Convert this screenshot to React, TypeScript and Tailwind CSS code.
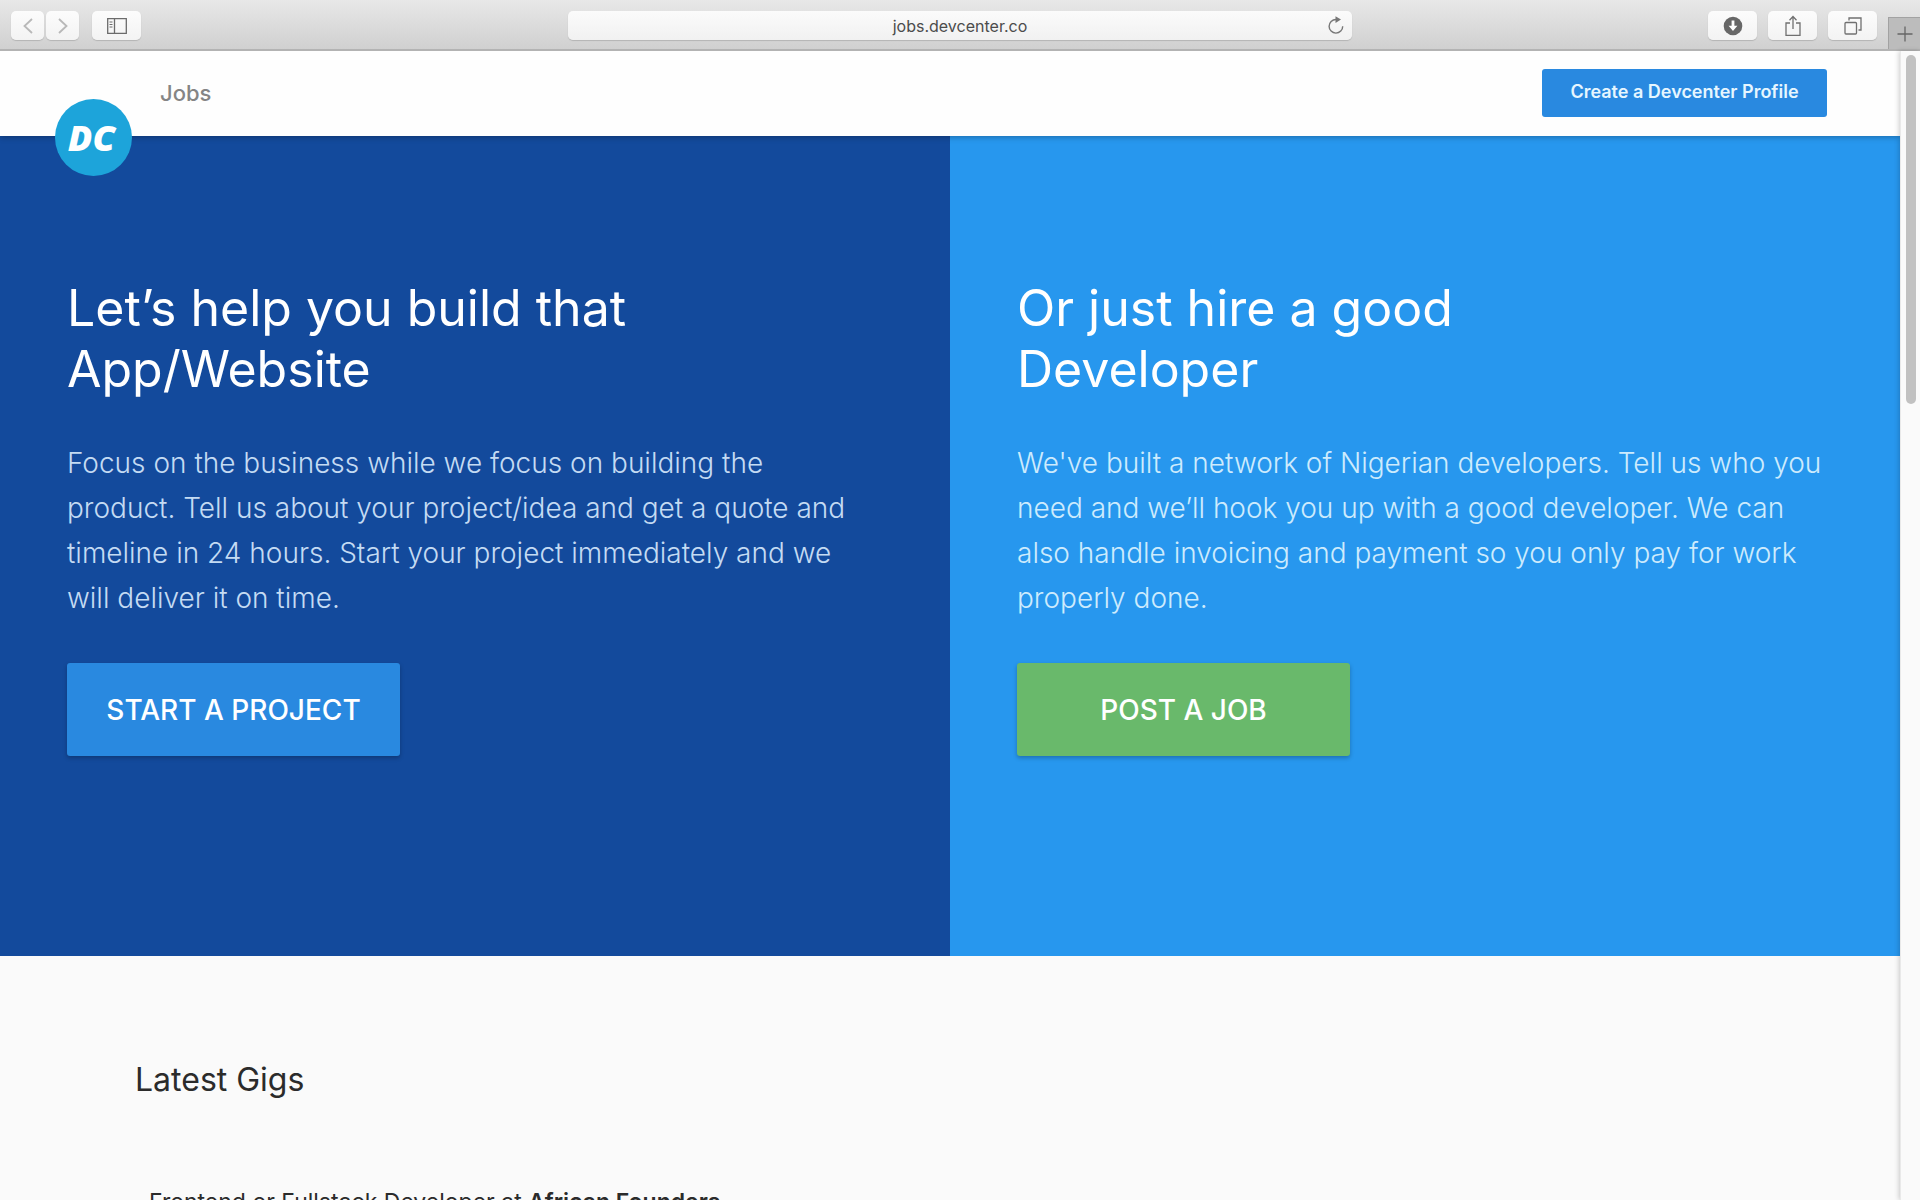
import { Fragment, type ReactNode } from "react";

type Pitch = {
  title: string[];
  body: string[];
  action: string;
  panelClass: string;
  bodyClass: string;
  buttonClass: string;
};

const PITCHES: Pitch[] = [
  {
    title: ["Let’s help you build that", "App/Website"],
    body: [
      "Focus on the business while we focus on building the",
      "product. Tell us about your project/idea and get a quote and",
      "timeline in 24 hours. Start your project immediately and we",
      "will deliver it on time.",
    ],
    action: "START A PROJECT",
    panelClass: "bg-[#134a9c]",
    bodyClass: "text-[#c4dbf3]",
    buttonClass: "bg-[#2989e0]",
  },
  {
    title: ["Or just hire a good", "Developer"],
    body: [
      "We've built a network of Nigerian developers. Tell us who you",
      "need and we’ll hook you up with a good developer. We can",
      "also handle invoicing and payment so you only pay for work",
      "properly done.",
    ],
    action: "POST A JOB",
    panelClass: "bg-[#2797ee]",
    bodyClass: "text-[#cdebfd]",
    buttonClass: "bg-[#69b96b]",
  },
];

const GIGS = [
  { role: "Frontend or Fullstack Developer", company: "African Founders" },
];

function Lines({ lines }: { lines: string[] }) {
  return lines.map((line, i) => (
    <Fragment key={line}>
      {i > 0 && <br />}
      {line}
    </Fragment>
  ));
}

function ToolbarButton({
  label,
  narrow,
  children,
}: {
  label: string;
  narrow?: boolean;
  children: ReactNode;
}) {
  return (
    <button
      aria-label={label}
      className={`flex h-[29px] items-center justify-center rounded-[5px] bg-linear-to-b from-[#fcfcfc] to-[#f3f3f3] shadow-[0_1px_1px_#b4b4b4] ${
        narrow ? "w-[33px]" : "w-[49px]"
      }`}
    >
      {children}
    </button>
  );
}

function BrowserToolbar() {
  return (
    <div className="grid h-[51px] shrink-0 grid-cols-[1fr_784px_1fr] border-b-2 border-[#b3b3b3] bg-linear-to-b from-[#e8e8e8] to-[#d0d0d0] pt-[11px]">
      <div className="flex items-start gap-[13px] pl-[11px]">
        <div className="flex gap-0.5">
          <ToolbarButton label="Back" narrow>
            <svg width="10" height="16" viewBox="0 0 10 16" fill="none" stroke="#b8b8b8" strokeWidth="1.8">
              <path d="M9 1 1.5 8 9 15" />
            </svg>
          </ToolbarButton>
          <ToolbarButton label="Forward" narrow>
            <svg width="10" height="16" viewBox="0 0 10 16" fill="none" stroke="#b8b8b8" strokeWidth="1.8">
              <path d="M1 1 8.5 8 1 15" />
            </svg>
          </ToolbarButton>
        </div>
        <ToolbarButton label="Show sidebar">
          <svg width="20" height="16" viewBox="0 0 20 16" fill="none" stroke="#6b6b6b" strokeWidth="1.3">
            <path d="M.7.7h18.6v14.6H.7zM7.5.7v14.6" />
            <path d="M2.5 4h3M2.5 6.5h3M2.5 9h3" strokeWidth="1" />
          </svg>
        </ToolbarButton>
      </div>

      <div className="relative">
        <input
          aria-label="Address"
          defaultValue="jobs.devcenter.co"
          className="block h-[29px] w-full rounded-[5px] bg-linear-to-b from-[#fbfbfb] to-[#f1f1f1] text-center text-base text-[#4c4c4c] shadow-[0_1px_1px_#b4b4b4]"
        />
        <button aria-label="Reload" className="absolute top-[5px] right-2">
          <svg width="16" height="18" viewBox="0 0 16 18" fill="none" stroke="#777" strokeWidth="1.4">
            <path d="M14.7 10.2A6.8 6.8 0 1 1 8 3.5h1" />
            <path d="M7.5.3 13 3.6 7.5 7z" fill="#777" stroke="none" />
          </svg>
        </button>
      </div>

      <div className="flex items-start justify-end gap-[11px]">
        <ToolbarButton label="Downloads">
          <svg width="20" height="20" viewBox="0 0 20 20">
            <circle cx="10" cy="10" r="9.3" fill="#676767" />
            <path d="M8.6 4.5h2.8v5.2h3L10 15 5.6 9.7h3z" fill="#fff" />
          </svg>
        </ToolbarButton>
        <ToolbarButton label="Share">
          <svg width="16" height="22" viewBox="0 0 16 22" fill="none" stroke="#707070" strokeWidth="1.3">
            <path d="M5 8H1v12.3h14V8h-4M8 14V2M4.5 5.2 8 1.5l3.5 3.7" />
          </svg>
        </ToolbarButton>
        <ToolbarButton label="Show all tabs">
          <svg width="18" height="18" viewBox="0 0 18 18" fill="none" stroke="#707070" strokeWidth="1.3">
            <rect x="1" y="5.5" width="11.5" height="11.5" rx="1" />
            <path d="M5 3.5V1h12v12h-2.5" />
          </svg>
        </ToolbarButton>
        <button
          aria-label="New tab"
          className="mt-1.5 flex h-8 w-8 items-center justify-center border-t border-l border-[#a2a2a2] bg-[#bcbcbc]"
        >
          <svg width="16" height="16" viewBox="0 0 16 16" stroke="#666" strokeWidth="1.3">
            <path d="M8 .5v15M.5 8h15" />
          </svg>
        </button>
      </div>
    </div>
  );
}

function SiteHeader() {
  return (
    <header className="relative z-10 flex h-[85px] justify-between bg-[#fefefe] pr-[73px] pl-[55px] shadow-[0_1px_6px_rgba(0,0,0,0.3)]">
      <div className="flex gap-7">
        {/* logo hangs over the edge of the bar */}
        <a
          href="#"
          aria-label="Devcenter home"
          className="mt-12 flex h-[77px] w-[77px] items-center justify-center rounded-full bg-[#1da4da] pr-1 font-['Open_Sans',sans-serif] text-4xl font-extrabold text-white italic"
        >
          DC
        </a>
        <a href="#" className="mt-[26px] self-start text-[22px] leading-8 font-medium text-[#858585]">
          Jobs
        </a>
      </div>
      <a
        href="#"
        className="mt-[18px] flex h-12 w-[285px] items-center justify-center self-start rounded-[3px] bg-[#2989e0] pb-0.5 text-lg font-semibold text-[#e6f6ff]"
      >
        Create a Devcenter Profile
      </a>
    </header>
  );
}

function PitchPanel({ pitch }: { pitch: Pitch }) {
  return (
    <section className={`px-[67px] pt-[142px] pb-[200px] text-white ${pitch.panelClass}`}>
      <h1 className="text-[50px] leading-[61px] font-normal">
        <Lines lines={pitch.title} />
      </h1>
      <p className={`mt-[41px] text-[28px] leading-[45px] font-light ${pitch.bodyClass}`}>
        <Lines lines={pitch.body} />
      </p>
      <button
        className={`mt-[42px] h-[93px] w-[333px] rounded-[3px] text-[28px] font-medium shadow-[0_2px_4px_rgba(0,0,0,0.25)] ${pitch.buttonClass}`}
      >
        {pitch.action}
      </button>
    </section>
  );
}

export default function App() {
  return (
    <div className="flex h-screen flex-col overflow-hidden bg-[#fafafa] font-[Inter,sans-serif]">
      <BrowserToolbar />
      <div className="flex min-h-0 flex-1">
        <div className="min-w-0 flex-1 overflow-hidden">
          <SiteHeader />
          <main>
            <div className="grid grid-cols-2">
              {PITCHES.map((pitch) => (
                <PitchPanel key={pitch.action} pitch={pitch} />
              ))}
            </div>
            <section className="px-[135px] pt-[104px]">
              <h2 className="text-[32px] leading-10 text-[#2b2b2b]">Latest Gigs</h2>
              <ul className="mt-[86px] px-3.5">
                {GIGS.map((gig) => (
                  <li key={gig.company} className="text-[23px] leading-8 text-[#2b2b2b]">
                    {gig.role} at <strong className="font-semibold">{gig.company}</strong>
                  </li>
                ))}
              </ul>
            </section>
          </main>
        </div>
        {/* Scrollbar */}
        <div className="z-20 flex w-5 justify-center border-l border-[#e9e9e9] bg-[#fafafa] pt-1 shadow-[-1px_0_5px_rgba(0,0,0,0.2)]">
          <div className="h-[349px] w-2.5 rounded-full bg-[#c1c1c1]" />
        </div>
      </div>
    </div>
  );
}
